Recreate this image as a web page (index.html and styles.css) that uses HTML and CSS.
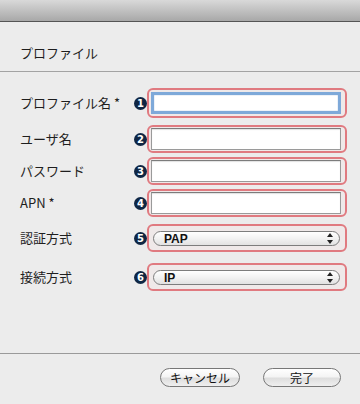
FILE: index.html
```html
<!DOCTYPE html>
<html>
<head>
    <title>プロファイル</title>
    <link rel="stylesheet" href="styles.css">
</head>
<body>
<div class="window">
    <div class="titlebar"></div>

    <div class="header">プロファイル</div>

    <div class="form">
        <div class="row row-first">
            <label class="label">プロファイル名 *</label>
            <span class="badge">1</span>
            <div class="box">
                <input class="field focus" type="text">
            </div>
        </div>

        <div class="row">
            <label class="label">ユーザ名</label>
            <span class="badge">2</span>
            <div class="box">
                <input class="field" type="text">
            </div>
        </div>

        <div class="row">
            <label class="label">パスワード</label>
            <span class="badge">3</span>
            <div class="box">
                <input class="field" type="password">
            </div>
        </div>

        <div class="row">
            <label class="label">APN *</label>
            <span class="badge">4</span>
            <div class="box">
                <input class="field" type="text">
            </div>
        </div>

        <div class="row row-select">
            <label class="label">認証方式</label>
            <span class="badge">5</span>
            <div class="box box-select">
                <div class="popup">
                    <span>PAP</span>
                    <svg class="arrows" width="6" height="11" viewBox="0 0 6 11">
                        <path d="M3 0 L6 4 L0 4 Z M0 7 L6 7 L3 11 Z" fill="#222"/>
                    </svg>
                </div>
            </div>
        </div>

        <div class="row row-select row-last">
            <label class="label">接続方式</label>
            <span class="badge">6</span>
            <div class="box box-select">
                <div class="popup">
                    <span>IP</span>
                    <svg class="arrows" width="6" height="11" viewBox="0 0 6 11">
                        <path d="M3 0 L6 4 L0 4 Z M0 7 L6 7 L3 11 Z" fill="#222"/>
                    </svg>
                </div>
            </div>
        </div>
    </div>

    <div class="footer">
        <button class="button">キャンセル</button>
        <button class="button button-wide">完了</button>
    </div>
</div>
</body>
</html>
```

FILE: styles.css
```css
body {
    margin: 0;
    font-family: "Noto Sans CJK JP", "Liberation Sans", sans-serif;
    background-color: #ececec;
    color: #1e1e1e;
}

.window {
    width: 360px;
    height: 404px;
    display: flex;
    flex-direction: column;
    background-color: #ececec;
}

.titlebar {
    height: 21px;
    background: linear-gradient(#d9d9d9, #a8a8a8);
    border-bottom: 1px solid #555555;
}

.header {
    font-size: 13px;
    line-height: 18px;
    padding: 22px 20px 9px;
    border-bottom: 1px solid #a3a3a3;
}

.form {
    display: flex;
    flex-direction: column;
    gap: 4px;
    padding-top: 16px;
    flex: 1;
}

.row {
    display: flex;
    align-items: center;
    padding-left: 20px;
}

.row-first {
    margin-bottom: 3px;
}

.row-select {
    margin-top: 3px;
}

.row-last {
    margin-top: 7px;
}

.label {
    width: 114px;
    font-size: 13px;
    line-height: 18px;
}

.badge {
    width: 13px;
    height: 13px;
    border-radius: 50%;
    background-color: #0f2644;
    color: #ffffff;
    font-family: "DejaVu Sans", sans-serif;
    font-size: 10px;
    font-weight: bold;
    line-height: 13px;
    text-align: center;
}

.box {
    box-sizing: border-box;
    width: 200px;
    border: 2px solid #e07a80;
    border-radius: 6px;
    padding: 1px 4px 1px 2px;
    background-color: #efe9e9;
}

.row-first .box {
    padding: 2px 4px 2px 2px;
}

.field {
    display: block;
    box-sizing: border-box;
    width: 100%;
    height: 22px;
    margin: 0;
    border: 1px solid #9a9a9a;
    border-top-color: #7c7c7c;
    box-shadow: inset 0 1px 1px rgba(0, 0, 0, 0.12);
    background-color: #ffffff;
    outline: none;
}

.field.focus {
    border: 3px solid #7ea9d9;
    box-shadow: inset 0 0 1px #4a7cb6;
}

.box-select {
    padding: 5px 5px 4px 4px;
}

.popup {
    box-sizing: border-box;
    height: 15px;
    display: flex;
    align-items: center;
    justify-content: space-between;
    padding: 0 6px 0 10px;
    border: 1px solid #7d7d7d;
    border-radius: 8px;
    background: linear-gradient(#ffffff, #f2f2f2 50%, #e2e2e2);
    font-family: "Liberation Sans", sans-serif;
    font-size: 12px;
    font-weight: bold;
    color: #111111;
}

.arrows {
    display: block;
}

.footer {
    display: flex;
    justify-content: flex-end;
    gap: 23px;
    padding: 14px 19px 17px 0;
    border-top: 1px solid #9a9a9a;
}

.button {
    width: 80px;
    height: 19px;
    padding: 0;
    border: 1px solid #777777;
    border-radius: 10px;
    background: linear-gradient(#ffffff, #f4f4f4 45%, #dedede 55%, #efefef);
    font-family: "Noto Sans CJK JP", sans-serif;
    font-size: 12px;
    line-height: 17px;
    color: #111111;
}

.button-wide {
    width: 78px;
}
```
